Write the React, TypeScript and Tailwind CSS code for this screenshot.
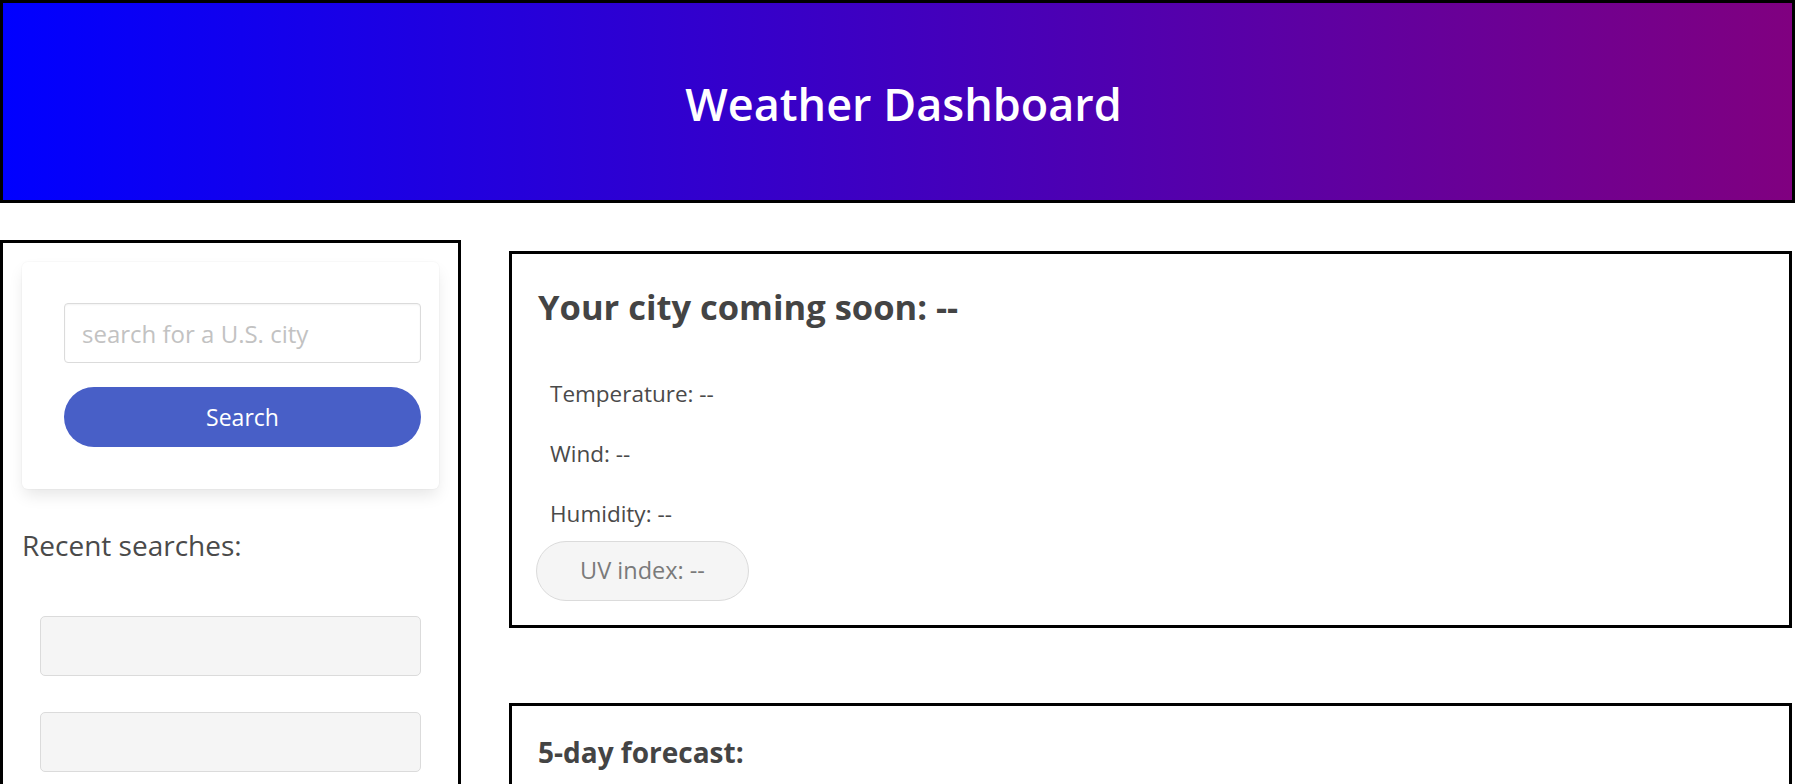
export default function App() {
  const recent = [0, 1, 2, 3];

  return (
    <div className="min-h-screen bg-white font-['Segoe_UI','Open_Sans',sans-serif] text-[#4a4a4a]">
      <header className="flex h-[203px] items-center justify-center border-[3px] border-black bg-[linear-gradient(to_right,#0000ff,#800080)] pl-[12px] pt-[4px]">
        <h1 className="text-[45px] font-semibold leading-none text-white">
          Weather Dashboard
        </h1>
      </header>

      <div className="flex items-start">
        <aside className="mt-[37px] w-[461px] shrink-0 border-[3px] border-black p-[19px]">
          <div className="rounded-[6px] bg-white pb-[42px] pl-[42px] pr-[18px] pt-[41px] shadow-[0_8px_16px_-2px_rgba(10,10,10,0.1),0_0_0_1px_rgba(10,10,10,0.02)]">
            <input
              type="text"
              placeholder="search for a U.S. city"
              className="block h-[60px] w-full rounded-[4px] border border-[#dbdbdb] px-[17px] text-[24px] shadow-[inset_0_1px_2px_rgba(10,10,10,0.05)] outline-none placeholder:text-[#c2c2c2]"
            />
            <button className="mt-[24px] block h-[60px] w-full rounded-full bg-[#485fc7] text-[23px] text-white">
              Search
            </button>
          </div>

          <h2 className="mt-[35px] text-[28px] leading-[42px]">Recent searches:</h2>

          <div className="mx-[18px] mt-[50px] flex flex-col gap-[36px]">
            {recent.map((i) => (
              <div
                key={i}
                className="h-[60px] rounded-[5px] border border-[#dbdbdb] bg-[#f5f5f5]"
              />
            ))}
          </div>
        </aside>

        <main className="ml-[48px] mr-[3px] mt-[48px] flex-1">
          <section className="border-[3px] border-black pb-[24px] pl-[26px] pr-[24px] pt-[33px]">
            <h2 className="text-[34.5px] font-bold leading-[40px] text-[#444]">
              Your city coming soon: --
            </h2>
            <div className="mt-[49px] flex flex-col gap-[24px] pl-[12px] text-[22.5px] leading-[36px]">
              <p>Temperature: --</p>
              <p>Wind: --</p>
              <p>Humidity: --</p>
            </div>
            <div className="-ml-[2px] mt-[9px] flex h-[60px] w-[213px] items-center justify-center rounded-full border border-[#dbdbdb] bg-[#f5f5f5] text-[23.5px] text-[#7a7a7a]">
              UV index: --
            </div>
          </section>

          <section className="mt-[75px] h-[320px] border-[3px] border-black pl-[26px] pr-[24px] pt-[31px]">
            <h3 className="text-[28px] font-bold leading-[30px] text-[#444]">5-day forecast:</h3>
          </section>
        </main>
      </div>
    </div>
  );
}
